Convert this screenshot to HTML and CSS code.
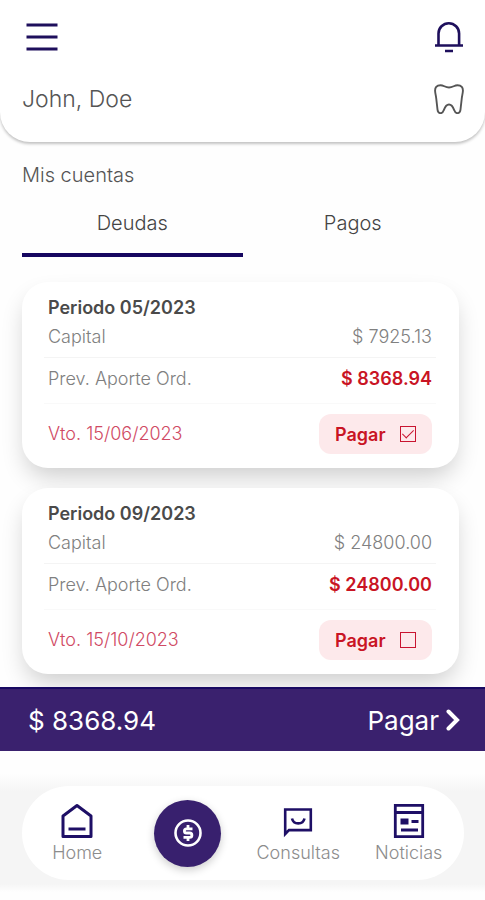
FILE: index.html
```html
<!DOCTYPE html>
<html lang="es">
<head>
<meta charset="utf-8">
<meta name="viewport" content="width=device-width, initial-scale=1">
<title>Mis cuentas</title>
<link rel="stylesheet" href="styles.css">
</head>
<body>
<header class="top">
  <div class="top-row">
    <button class="icon-button" type="button" aria-label="Menú">
      <svg width="32" height="28" viewBox="0 0 32 28" fill="none" stroke="currentColor" stroke-width="3"><path d="M.5 2h31M.5 14h31M.5 26h31"/></svg>
    </button>
    <button class="icon-button" type="button" aria-label="Notificaciones">
      <svg width="30" height="32" viewBox="0 0 30 32" fill="none" stroke="currentColor" stroke-width="2.6"><path d="M1 24.5h28M4.500 24.500V12.500a10.300 10.300 0 0 1 20.600 0v12M11 30h8"/></svg>
    </button>
  </div>
  <div class="top-row">
    <p class="user">John, Doe</p>
    <svg class="tooth" width="30" height="30" viewBox="0 0 30 30" fill="none" stroke="currentColor" stroke-width="1.9" stroke-linejoin="round"><path d="M6.500 1.200C2.500 1.200.9 3.800 1.100 7c.2 3 .9 4.500 1.200 8l1.200 10.500c.4 4.600 4.900 4.800 6.200.8 1.200-3.200 2.800-5.800 5.300-5.800s4.100 2.600 5.300 5.800c1.300 4 5.800 3.800 6.200-.8l1.200-10.500c.3-3.500 1-5 1.200-8 .2-3.200-1.400-5.800-5.400-5.800-3.300 0-4.500 2.300-8.500 2.300S9.800 1.200 6.500 1.200z"/></svg>
  </div>
</header>

<main class="content">
  <h1 class="heading">Mis cuentas</h1>
  <div class="tabs" role="tablist">
    <button class="tab tab-active" type="button" role="tab" aria-selected="true">Deudas</button>
    <button class="tab" type="button" role="tab" aria-selected="false">Pagos</button>
  </div>

  <div class="cards">
    <article class="card">
      <h2 class="card-title">Periodo 05/2023</h2>
      <div class="line"><span>Capital</span><span>$ 7925.13</span></div>
      <div class="line line-due"><span>Prev. Aporte Ord.</span><strong class="due">$ 8368.94</strong></div>
      <div class="card-foot">
        <span class="expiry">Vto. 15/06/2023</span>
        <label class="pay" for="pay-05">Pagar <input class="check" id="pay-05" type="checkbox" checked></label>
      </div>
    </article>
    <article class="card">
      <h2 class="card-title">Periodo 09/2023</h2>
      <div class="line"><span>Capital</span><span>$ 24800.00</span></div>
      <div class="line line-due"><span>Prev. Aporte Ord.</span><strong class="due">$ 24800.00</strong></div>
      <div class="card-foot">
        <span class="expiry">Vto. 15/10/2023</span>
        <label class="pay" for="pay-09">Pagar <input class="check" id="pay-09" type="checkbox"></label>
      </div>
    </article>
  </div>
</main>

<div class="total">
  <span>$ 8368.94</span>
  <button class="total-pay" type="button">Pagar
    <svg width="14" height="22" viewBox="0 0 14 22" fill="none" stroke="currentColor" stroke-width="4" stroke-linecap="round" stroke-linejoin="miter"><path d="M2.500 2.500 11 11l-8.500 8.500"/></svg>
  </button>
</div>

<footer class="dock">
  <nav class="nav">
    <a class="nav-item" href="#home">
      <svg width="34" height="36" viewBox="0 0 34 36" fill="none" stroke="currentColor" stroke-width="3"><path d="M3 33.500V13L17 2.500 31 13v20.500z" stroke-linejoin="round"/><path d="M8.500 26h17"/></svg>
      <span>Home</span>
    </a>
    <a class="nav-main" href="#cuentas" aria-label="Cuentas">
      <svg width="28" height="28" viewBox="0 0 28 28" fill="none" stroke="currentColor"><circle cx="14" cy="14" r="12.500" stroke-width="2.600"/><path d="M18.500 9.800h-6a2.100 2.100 0 0 0 0 4.200h3.200a2.200 2.200 0 0 1 0 4.400H9.500M14 6v3.500M14 18.500V22" stroke-width="2.800"/></svg>
    </a>
    <a class="nav-item" href="#consultas">
      <svg width="30" height="36" viewBox="0 0 30 36" fill="none" stroke="currentColor" stroke-width="2.600"><path d="M2.200 31V6.500h25.600v20.600H6z"/><path d="M9 15.500c1.500 6.500 11 6.500 12.500 0"/></svg>
      <span>Consultas</span>
    </a>
    <a class="nav-item" href="#noticias">
      <svg width="32" height="36" viewBox="0 0 32 36" fill="none" stroke="currentColor" stroke-width="2.800"><path d="M2.300 2.300h27.400v31.400H2.300zM2.300 9.500h27.400M18.500 18.500h7M8 27h17"/><path d="M7.500 15.500h8v6h-8z" fill="currentColor" stroke="none"/></svg>
      <span>Noticias</span>
    </a>
  </nav>
</footer>
</body>
</html>
```
FILE: styles.css
```css
* {
  box-sizing: border-box;
}

body {
  margin: 0;
  min-height: 100vh;
  display: flex;
  flex-direction: column;
  background: #fefefe;
  color: #555;
  font-family: Inter, "Liberation Sans", sans-serif;
  font-weight: 300;
}

h1, h2, p {
  margin: 0;
  font-weight: inherit;
}

button {
  padding: 0;
  border: 0;
  background: none;
  color: inherit;
  font: inherit;
  cursor: pointer;
}

svg {
  display: block;
  flex: none;
}

.top {
  display: flex;
  flex-direction: column;
  gap: 28px;
  padding: 20px 21px 26px 22px;
  border-radius: 0 0 30px 30px;
  background: #fff;
  box-shadow: 0 2px 3px rgba(0, 0, 0, 0.24);
}

.top-row {
  display: flex;
  align-items: center;
  justify-content: space-between;
  height: 34px;
}

.icon-button {
  color: #1e0f5c;
}

.icon-button:first-child {
  padding-left: 4px;
}

.user {
  font-size: 23px;
  line-height: 28px;
}

.tooth {
  color: #555;
}

.content {
  padding: 21px 22px 13px;
}

.heading {
  font-size: 20px;
  line-height: 24px;
}

.tabs {
  display: flex;
  margin-top: 12px;
}

.tab {
  flex: 1;
  height: 58px;
  padding-bottom: 6px;
  border-bottom: 4px solid transparent;
  font-size: 20px;
  line-height: 24px;
  color: #444;
}

.tab-active {
  border-bottom-color: #160660;
}

.cards {
  display: flex;
  flex-direction: column;
  gap: 20px;
  margin: 25px 4px 0 0;
}

.card {
  padding: 14px 23px 14px 22px;
  border-radius: 26px;
  background: #fff;
  box-shadow: 0 12px 24px -4px rgba(0, 0, 0, 0.2);
}

.card-title {
  padding: 0 4px;
  font-size: 18px;
  line-height: 24px;
  font-weight: 600;
  color: #4a4a4a;
}

.line {
  display: flex;
  align-items: center;
  justify-content: space-between;
  height: 38px;
  padding: 0 4px 4px;
  border-bottom: 1px solid #f4f4f4;
  font-size: 18px;
  line-height: 24px;
  color: #808080;
}

.line-due {
  height: 46px;
  border-bottom-color: #f9f9f9;
}

.due {
  font-weight: 600;
  color: #c91424;
}

.card-foot {
  display: flex;
  align-items: center;
  justify-content: space-between;
  padding: 10px 4px 0;
}

.expiry {
  font-size: 18px;
  line-height: 24px;
  color: #d04a64;
}

.pay {
  display: flex;
  align-items: center;
  justify-content: space-between;
  width: 113px;
  height: 40px;
  padding: 0 16px;
  border-radius: 12px;
  background: #fde9eb;
  color: #c91424;
  font-size: 18px;
  font-weight: 600;
  cursor: pointer;
}

.check {
  display: flex;
  justify-content: center;
  width: 16px;
  height: 16px;
  margin: 0;
  border: 1px solid #c91430;
  appearance: none;
}

.check:checked::after {
  content: "";
  width: 5px;
  height: 10px;
  border: solid #c91430;
  border-width: 0 1px 1px 0;
  transform: rotate(45deg);
}

.total {
  display: flex;
  align-items: center;
  justify-content: space-between;
  height: 64px;
  padding: 0 25px 0 28px;
  border-top: 2px solid #190a62;
  background: #3a216e;
  color: #fff;
  font-size: 26px;
  font-weight: 400;
}

.total-pay {
  display: flex;
  align-items: center;
  gap: 7px;
}

.dock {
  margin-top: 22px;
  padding: 13px 21px 12px 22px;
  background: linear-gradient(#fefefe, #f5f5f5 18px, #f5f5f5 calc(100% - 8px), #fefefe);
}

.nav {
  display: grid;
  grid-template-columns: repeat(4, 1fr);
  align-items: center;
  height: 94px;
  border-radius: 47px;
  background: #fff;
}

.nav-item {
  display: flex;
  flex-direction: column;
  align-items: center;
  gap: 3px;
  color: #1e0f66;
  text-decoration: none;
}

.nav-item span {
  font-size: 18px;
  line-height: 22px;
  color: #8c8c8c;
}

.nav-main {
  display: flex;
  align-items: center;
  justify-content: center;
  justify-self: center;
  width: 67px;
  height: 67px;
  border-radius: 50%;
  background: #38206e;
  box-shadow: 0 3px 8px rgba(0, 0, 0, 0.2);
  color: #fff;
}
```
